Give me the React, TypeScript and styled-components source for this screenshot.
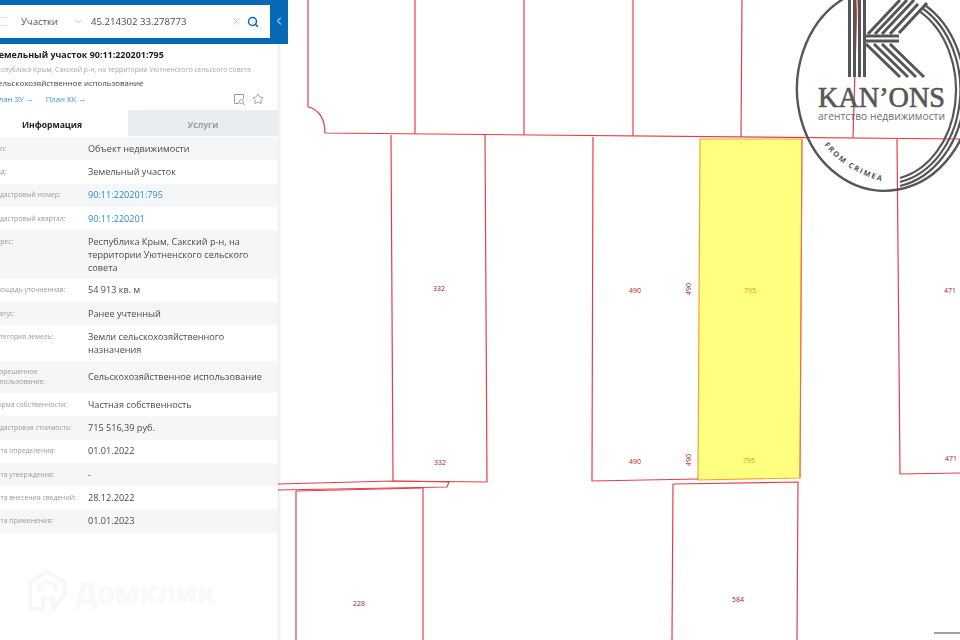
import React from "react";
import styled, { createGlobalStyle } from "styled-components";
import { ChevronDown, ChevronLeft, Search, Star, X } from "lucide-react";

const GlobalStyle = createGlobalStyle`
  html, body {
    margin: 0;
    padding: 0;
    background: #fff;
    overflow: hidden;
  }
`;

const Page = styled.div`
  display: flex;
  width: 960px;
  height: 640px;
  overflow: hidden;
  position: relative;
  font-family: "Open Sans", "Noto Sans", sans-serif;
  filter: blur(0.35px);
`;

const Sidebar = styled.aside`
  flex: 0 0 286px;
  min-width: 0;
  margin-left: -8px;
  display: flex;
  flex-direction: column;
  background: #fff;
  box-shadow: 1px 0 3px rgba(0, 0, 0, 0.12);
  position: relative;
  z-index: 2;
`;

const TopBar = styled.div`
  display: flex;
  align-items: flex-start;
  box-sizing: border-box;
  width: 296px;
  height: 44px;
  flex: 0 0 44px;
  padding-top: 5px;
  background: #0769b5;
`;

const SearchBox = styled.div`
  flex: 0 0 278px;
  height: 33px;
  display: flex;
  align-items: center;
  background: #fff;
  color: #555;
  font-size: 9.5px;
`;

const Burger = styled.span`
  width: 15px;
  height: 7px;
  margin-right: 14px;
  border-top: 1px solid #e2e2e2;
  border-bottom: 1px solid #e2e2e2;
`;

const Category = styled.span`
  width: 52px;
  color: #555;
`;

const Query = styled.span`
  flex: 1;
  margin-left: 7px;
  font-size: 9.65px;
  color: #4a4a4a;
`;

const Toggle = styled.div`
  flex: 1;
  display: flex;
  justify-content: center;
  padding-top: 10px;
  color: #8fc0e6;
`;

const Header = styled.header`
  display: flex;
  flex-direction: column;
  padding: 4px 0 0 1px;
  height: 66px;
  box-sizing: border-box;
  flex: 0 0 66px;
`;

const Title = styled.div`
  font-size: 8.95px;
  font-weight: 700;
  line-height: 13px;
  color: #1c1c1c;
  white-space: nowrap;
`;

const Address = styled.div`
  margin-top: 3px;
  font-size: 6.8px;
  line-height: 12px;
  color: #a8a8a8;
  white-space: nowrap;
`;

const Usage = styled.div`
  margin-top: 1px;
  font-size: 7.9px;
  line-height: 12px;
  color: #444;
  white-space: nowrap;
`;

const LinkRow = styled.div`
  display: flex;
  align-items: center;
  gap: 12px;
  margin-top: 3px;
  height: 14px;
  padding-right: 14px;
`;

const PlanLink = styled.span`
  font-size: 7.8px;
  color: #3f97d3;
  white-space: nowrap;
`;

const IconGroup = styled.div`
  margin-left: auto;
  display: flex;
  align-items: center;
  gap: 6px;
  color: #9aa0a6;
`;

const Tabs = styled.div`
  display: flex;
  height: 26px;
  flex: 0 0 26px;
  margin-bottom: 1px;
`;

const Tab = styled.div<{ $active?: boolean }>`
  flex: ${(p) => (p.$active ? "0 0 136px" : "1")};
  display: flex;
  align-items: center;
  justify-content: center;
  box-sizing: border-box;
  padding-top: 3px;
  padding-right: ${(p) => (p.$active ? "16px" : "0")};
  font-size: 8.6px;
  font-weight: 700;
  background: ${(p) => (p.$active ? "#fff" : "#e9ecf0")};
  color: ${(p) => (p.$active ? "#222" : "#9a9ea3")};
`;

const Row = styled.div<{ $shade: boolean; $tight?: boolean }>`
  display: flex;
  align-items: ${(p) => (p.$tight ? "center" : "flex-start")};
  box-sizing: border-box;
  padding: 4.8px 0;
  min-height: ${(p) => (p.$tight ? "32.5px" : "23.25px")};
  background: ${(p) => (p.$shade ? "#f5f6f8" : "#fff")};
`;

const Label = styled.div<{ $tight?: boolean }>`
  flex: 0 0 96px;
  box-sizing: border-box;
  padding-right: 4px;
  font-size: 6.8px;
  line-height: ${(p) => (p.$tight ? "9.5px" : "13px")};
  color: #9b9b9b;
`;

const Value = styled.div<{ $link?: boolean }>`
  flex: 1;
  padding-right: 14px;
  font-size: 9.15px;
  line-height: 13px;
  color: ${(p) => (p.$link ? "#2f8fd0" : "#4a4a4a")};
`;

const Watermark = styled.div`
  position: absolute;
  left: 27px;
  top: 570px;
  display: flex;
  align-items: center;
  gap: 8px;
  z-index: 3;
  color: #f9f9f9;
  font-size: 29px;
  font-weight: 700;
  text-shadow: 0 0 1px #f0f0f0;
`;

const MapArea = styled.main`
  flex: 1;
  position: relative;
  height: 640px;
  background: #fff;
`;

const MapCanvas = styled.svg`
  display: block;
  width: 682px;
  height: 640px;
`;

const Logo = styled.svg`
  position: absolute;
  right: 0;
  top: 0;
  width: 172px;
  height: 200px;
`;

const rows: { label: string; value: string; link?: boolean; tight?: boolean }[] = [
  { label: "Тип:", value: "Объект недвижимости" },
  { label: "Вид:", value: "Земельный участок" },
  { label: "Кадастровый номер:", value: "90:11:220201:795", link: true },
  { label: "Кадастровый квартал:", value: "90:11:220201", link: true },
  { label: "Адрес:", value: "Республика Крым, Сакский р-н, на территории Уютненского сельского совета" },
  { label: "Площадь уточненная:", value: "54 913 кв. м" },
  { label: "Статус:", value: "Ранее учтенный" },
  { label: "Категория земель:", value: "Земли сельскохозяйственного назначения" },
  { label: "Разрешенное использование:", value: "Сельскохозяйственное использование", tight: true },
  { label: "Форма собственности:", value: "Частная собственность" },
  { label: "Кадастровая стоимость:", value: "715 516,39 руб." },
  { label: "Дата определения:", value: "01.01.2022" },
  { label: "Дата утверждения:", value: "-" },
  { label: "Дата внесения сведений:", value: "28.12.2022" },
  { label: "Дата применения:", value: "01.01.2023" },
];

// map coordinates are page pixels, the viewBox starts where the map does
const boundaries = [
  "M308 0 L308 107 C318 109 325 118 325 133 L960 139",
  "M415 0 L415 134",
  "M524 0 L524 135",
  "M633 0 L633 136",
  "M742 0 L741 137",
  "M857 0 L853 138",
  "M391 135 L393 481 L487 482 L485 135",
  "M593 137 L592 481 L698 479",
  "M897 139 L900 474 L960 473",
  "M673 484 L798 482 L797 640",
  "M673 484 L672 640",
  "M278 484 L393 481 L449 482 L447 487 L278 490",
  "M296 491 L423 488",
  "M296 491 L296 640",
  "M423 488 L423 640",
];

const labels: { x: number; y: number; t: string; own?: boolean; turn?: boolean }[] = [
  { x: 439, y: 291, t: "332" },
  { x: 440, y: 465, t: "332" },
  { x: 635, y: 293, t: "490" },
  { x: 635, y: 464, t: "490" },
  { x: 691, y: 289, t: "490", turn: true },
  { x: 691, y: 460, t: "490", turn: true },
  { x: 750, y: 293, t: "795", own: true },
  { x: 749, y: 463, t: "795", own: true },
  { x: 950, y: 293, t: "471" },
  { x: 951, y: 461, t: "471" },
  { x: 359, y: 606, t: "228" },
  { x: 738, y: 602, t: "584" },
];

const MapDrawing = () => (
  <MapCanvas viewBox="278 0 682 640">
    <polygon points="700,139 802,139 800,478 698,480" fill="#ffff80" stroke="#f2a23c" strokeWidth="1.2" />
    {boundaries.map((d) => (
      <path key={d} d={d} fill="none" stroke="#e63e48" strokeWidth="1.2" />
    ))}
    <line x1="802" y1="139" x2="800" y2="478" stroke="#ea6a40" strokeWidth="1" />
    {labels.map((l) => (
      <text
        key={`${l.x}-${l.y}`}
        x={l.x}
        y={l.y}
        textAnchor="middle"
        fontFamily='"Open Sans", sans-serif'
        fontSize="7"
        fill={l.own ? "#d9952a" : "#a82020"}
        transform={l.turn ? `rotate(-90 ${l.x} ${l.y})` : undefined}
      >
        {l.t}
      </text>
    ))}
    <line x1="934" y1="633" x2="960" y2="633" stroke="#444" strokeWidth="1" />
  </MapCanvas>
);

const KanonsLogo = () => (
  <Logo viewBox="788 0 172 200">
    <g fill="none" stroke="#565656">
      <path d="M843 -1 A87.5 102 0 1 0 972 90" strokeWidth="2.4" />
      <path d="M920 11.7 A71 90 0 0 1 900 178" strokeWidth="2.2" />
      <path d="M922 8 A75.5 94 0 0 1 900 182" strokeWidth="2.2" />
      <path d="M924 4.5 A80 98 0 0 1 900 186" strokeWidth="2.2" />
      <g strokeWidth="3">
        <path d="M849.5 0V77M854.5 0V77M859.5 0V77M864.5 0V77" />
        <path d="M866 36H899M866 41H899" />
        <path d="M868 34L900 0M875 34L907 0M882 34L914 0M890 34L918 4M899 33L927 3" />
        <path d="M866 44L900 77M874 44L908 77M882 44L916 77M890 44L924 77" />
      </g>
    </g>
    <text x="818" y="107" fontFamily='"Liberation Serif", serif' fontSize="29" fill="#565656" stroke="#565656" strokeWidth="0.6" textLength="127" lengthAdjust="spacingAndGlyphs">
      KAN’ONS
    </text>
    <text x="818" y="120" fontFamily='"Open Sans", sans-serif' fontSize="10.5" fill="#707070" textLength="127" lengthAdjust="spacingAndGlyphs">
      агентство недвижимости
    </text>
    <path id="crimea-arc" d="M824 145 Q846 172 884 182" fill="none" />
    <text fontFamily='"Open Sans", sans-serif' fontSize="7.5" fontWeight="700" fill="#555" letterSpacing="1.6">
      <textPath href="#crimea-arc">FROM CRIMEA</textPath>
    </text>
  </Logo>
);

const HouseMark = () => (
  <svg width="40" height="42" viewBox="0 0 40 42" fill="none" stroke="#f7f7f7" strokeWidth="4" strokeLinejoin="round">
    <path d="M20 2 L38 12 V24 L26 39 V28 L16 28 V39 H3 V12 Z" />
    <path d="M12 22 V16 L20 11 L29 16 V21" />
  </svg>
);

const DocSearchIcon = () => (
  <svg width="13" height="13" viewBox="0 0 13 13" fill="none" stroke="currentColor" strokeWidth="1">
    <path d="M6 10.5H1.5V1.5H10.5V6" />
    <circle cx="8.3" cy="8.6" r="2" />
    <path d="M10 10.2L12 12" />
  </svg>
);

export default function App() {
  return (
    <Page>
      <GlobalStyle />
      <Sidebar>
        <TopBar>
          <SearchBox>
            <Burger />
            <Category>Участки</Category>
            <ChevronDown size={11} color="#b9bcc0" />
            <Query>45.214302 33.278773</Query>
            <X size={11} color="#c8c8c8" style={{ marginRight: 5 }} />
            <Search size={12} color="#0769b5" strokeWidth={3} style={{ marginRight: 11 }} />
          </SearchBox>
          <Toggle>
            <ChevronLeft size={12} strokeWidth={2.5} />
          </Toggle>
        </TopBar>
        <Header>
          <Title>Земельный участок 90:11:220201:795</Title>
          <Address>Республика Крым, Сакский р-н, на территории Уютненского сельского совета</Address>
          <Usage>Сельскохозяйственное использование</Usage>
          <LinkRow>
            <PlanLink>План ЗУ →</PlanLink>
            <PlanLink>План КК →</PlanLink>
            <IconGroup>
              <DocSearchIcon />
              <Star size={12} />
            </IconGroup>
          </LinkRow>
        </Header>
        <Tabs>
          <Tab $active>Информация</Tab>
          <Tab>Услуги</Tab>
        </Tabs>
        {rows.map((r, i) => (
          <Row key={r.label} $shade={i % 2 === 0} $tight={r.tight}>
            <Label $tight={r.tight}>{r.label}</Label>
            <Value $link={r.link}>{r.value}</Value>
          </Row>
        ))}
      </Sidebar>
      <Watermark>
        <HouseMark />
        Домклик
      </Watermark>
      <MapArea>
        <MapDrawing />
        <KanonsLogo />
      </MapArea>
    </Page>
  );
}
